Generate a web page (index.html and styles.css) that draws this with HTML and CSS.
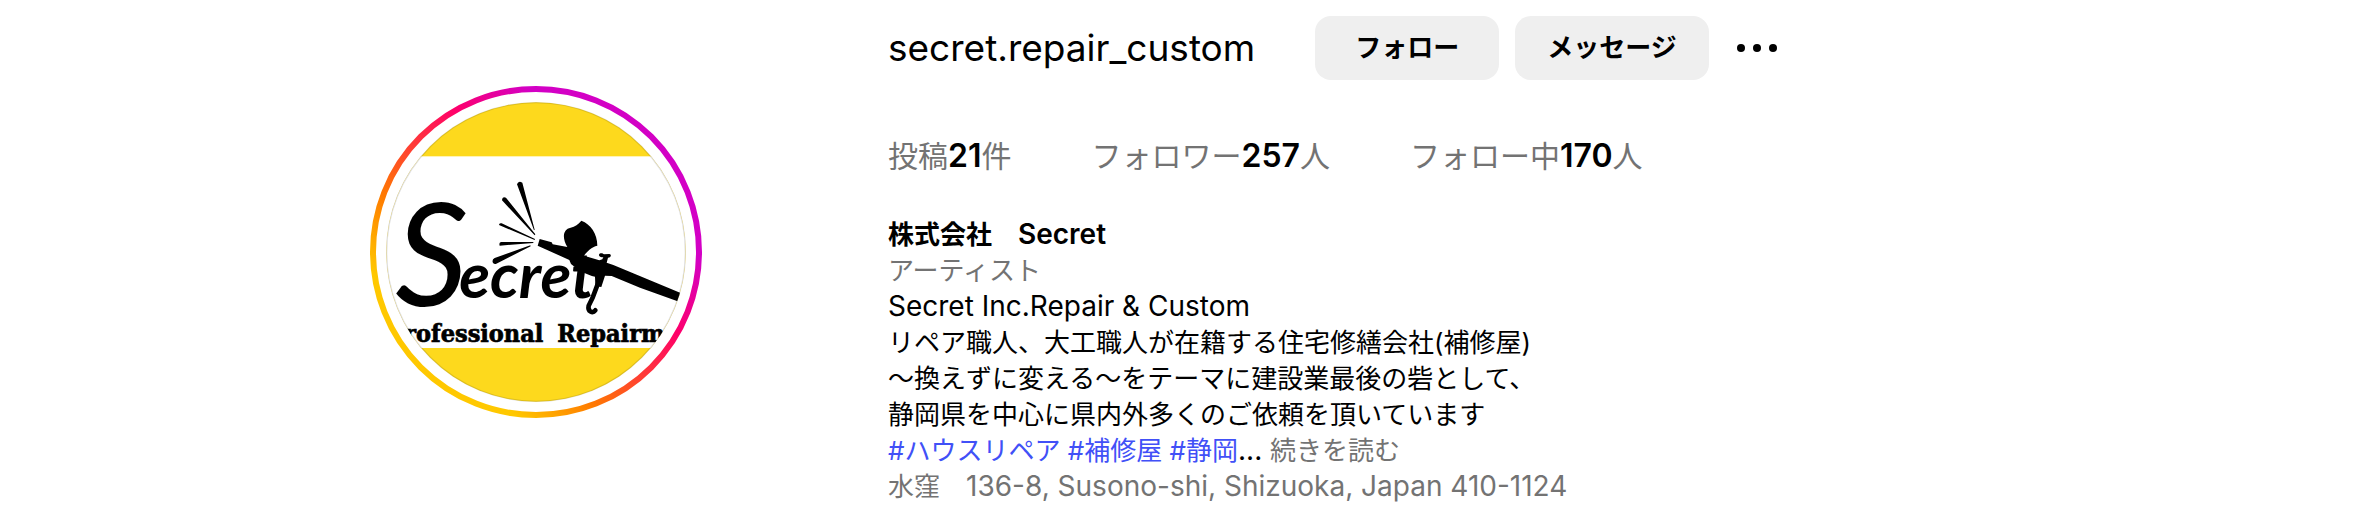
FILE: index.html
```
<!DOCTYPE html>
<html lang="ja">

<head>
    <meta charset="UTF-8">
    <meta name="viewport" content="width=device-width, initial-scale=1.0">
    <title>secret.repair_custom</title>
    <link rel="stylesheet" href="styles.css">
</head>

<body>
    <header class="profile">
        <div class="profile-photo">
            <svg class="avatar" viewBox="30 33 996 996" role="img" aria-label="secret.repair_custom">
                <defs>
                    <linearGradient id="ring" gradientUnits="userSpaceOnUse" x1="182" y1="877" x2="874" y2="185">
                        <stop offset="0.1" stop-color="#ffc800" />
                        <stop offset="0.29" stop-color="#ff7a00" />
                        <stop offset="0.63" stop-color="#ff0069" />
                        <stop offset="0.84" stop-color="#d300c5" />
                    </linearGradient>
                    <clipPath id="photo">
                        <circle cx="528" cy="531" r="449" />
                    </clipPath>
                </defs>
                <!-- story ring -->
                <circle cx="528" cy="531" r="489" fill="none" stroke="url(#ring)" stroke-width="18" />
                <g clip-path="url(#photo)">
                    <rect x="78" y="81" width="900" height="900" fill="#fdd91d" />
                    <rect x="78" y="244" width="900" height="575" fill="#fff" />
                    <text class="logo-script" x="106" y="694"><tspan class="logo-initial">S</tspan><tspan x="298" y="668">ecret</tspan></text>
                    <text class="logo-caption" x="550" y="802" text-anchor="end">Professional</text>
                    <text class="logo-caption" x="592" y="802">Repairman</text>
                    <!-- spray -->
                    <path d="M471 328Q475 316 487 323L524 464L522 466ZM426 376Q427 363 438 368L526 478L524 481ZM417 450Q417 443 425 445L525 492L524 495ZM419 512Q416 503 423 501L520 501V504ZM398 562Q396 552 404 549L511 511L512 514L409 566Q401 569 398 562Z" />
                    <!-- airbrush -->
                    <path d="M539 492L575 502L578 508L622 516C606 490 608 462 632 458C645 455 655 448 664 437C692 448 712 475 712 512C695 516 682 528 672 542L718 556L727 553L730 546C722 548 716 544 717 539C719 533 728 534 732 538L748 537C755 538 754 547 744 548L740 563L760 570L962 654L957 680L840 638L755 603L735 602L724 636L706 634L705 605C680 600 655 585 633 567L628 555L533 512Z" />
                    <path d="M714 625L698 668L686 692C682 710 698 716 706 706" fill="none" stroke="#000" stroke-width="14" stroke-linecap="round" />
                </g>
                <circle cx="528" cy="531" r="448" fill="none" stroke="#000" stroke-opacity="0.12" stroke-width="4" />
            </svg>
        </div>

        <section class="profile-info">
            <div class="title-row">
                <h2 class="username">secret.repair_custom</h2>
                <div class="actions">
                    <button class="btn btn-follow" type="button">フォロー</button>
                    <button class="btn btn-message" type="button">メッセージ</button>
                    <button class="btn-more" type="button" aria-label="オプション">
                        <svg class="dots" viewBox="0 0 48 48">
                            <circle cx="8" cy="24" r="4" />
                            <circle cx="24" cy="24" r="4" />
                            <circle cx="40" cy="24" r="4" />
                        </svg>
                    </button>
                </div>
            </div>

            <ul class="stats">
                <li>投稿<b>21</b>件</li>
                <li>フォロワー<b>257</b>人</li>
                <li>フォロー中<b>170</b>人</li>
            </ul>

            <div class="bio">
                <h1 class="name">株式会社　<span lang="en">Secret</span></h1>
                <div class="muted">アーティスト</div>
                <div><span lang="en">Secret Inc.Repair &amp; Custom</span></div>
                <div>リペア職人、大工職人が在籍する住宅修繕会社(補修屋)</div>
                <div>～換えずに変える～をテーマに建設業最後の砦として、</div>
                <div>静岡県を中心に県内外多くのご依頼を頂いています</div>
                <div><a href="#">#ハウスリペア</a> <a href="#">#補修屋</a> <a href="#">#静岡</a><span lang="en">... </span><button class="read-more" type="button">続きを読む</button></div>
                <div class="muted">水窪　<span lang="en">136-8, Susono-shi, Shizuoka, Japan 410-1124</span></div>
            </div>
        </section>
    </header>
</body>

</html>
```
FILE: styles.css
```
* {
    box-sizing: border-box;
}

body {
    margin: 0;
    background-color: #fff;
    color: #000;
    font-family: Inter, "Noto Sans CJK JP", sans-serif;
    font-size: 26px;
    line-height: 36px;
}

h1,
h2,
ul {
    margin: 0;
    padding: 0;
}

button {
    border: none;
    padding: 0;
    background: none;
    color: inherit;
    font: inherit;
    cursor: pointer;
}

.profile {
    display: flex;
    max-width: 1872px;
    margin: 0 auto;
    padding: 16px 60px 0 0;
    gap: 60px;
}

/* photo */
.profile-photo {
    flex: 1 1 0;
    display: flex;
    justify-content: center;
    padding-top: 70px;
}

.profile-info {
    flex: 2 1 0;
    min-width: 0;
}

.avatar {
    width: 332px;
    height: 332px;
}

.logo-script {
    font-family: Lato, sans-serif;
    font-style: italic;
    font-weight: 700;
    font-size: 190px;
}

.logo-initial {
    font-weight: 400;
    font-size: 430px;
}

.logo-caption {
    font-family: "DejaVu Serif Condensed", "DejaVu Serif", serif;
    font-weight: 700;
    font-size: 75px;
    stroke: #000;
    stroke-width: 2px;
}

/* username and buttons */
.title-row {
    display: flex;
    align-items: center;
    gap: 60px;
}

.username {
    font-size: 37px;
    font-weight: 400;
    line-height: 50px;
}

.actions {
    display: flex;
    align-items: center;
    gap: 16px;
}

.btn {
    height: 64px;
    border-radius: 16px;
    background-color: #efefef;
    font-weight: 600;
}

.btn-follow {
    padding: 0 40px;
}

.btn-message {
    padding: 0 32px;
}

.btn-more {
    display: flex;
    padding: 8px;
}

.dots {
    width: 48px;
    height: 48px;
}

/* counters */
.stats {
    display: flex;
    gap: 80px;
    margin-top: 58px;
    color: #737373;
    font-size: 30px;
    list-style: none;
}

.stats b {
    color: #000;
    font-size: 32px;
    font-weight: 600;
    line-height: 1;
}

/* bio */
.bio {
    margin-top: 43px;
}

/* latin text runs a little larger than the kanji beside it */
.bio :lang(en) {
    font-size: 28px;
    line-height: 1;
}

.name {
    font-size: 26px;
    font-weight: 600;
}

.muted,
.read-more {
    color: #737373;
}

.bio a {
    color: #4150f7;
    text-decoration: none;
}
```
